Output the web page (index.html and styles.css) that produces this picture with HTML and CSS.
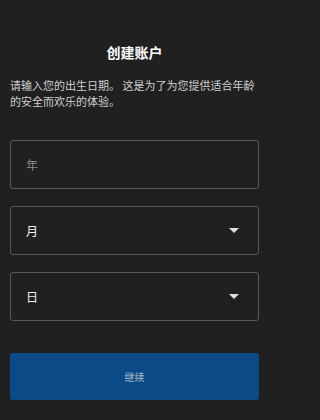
FILE: index.html
```html
<!DOCTYPE html>
<html lang="zh">
<head>
<meta charset="utf-8">
<link rel="stylesheet" href="styles.css">
</head>
<body>
<main class="page">
  <h1 class="title">创建账户</h1>
  <p class="desc">请输入您的出生日期。 这是为了为您提供适合年龄的安全而欢乐的体验。</p>
  <div class="field"><span class="placeholder">年</span></div>
  <div class="field select"><span class="value">月</span><span class="caret"></span></div>
  <div class="field select"><span class="value">日</span><span class="caret"></span></div>
  <button class="btn">继续</button>
</main>
</body>
</html>
```
FILE: styles.css
```css
html, body {
  margin: 0;
  padding: 0;
  background: #202020;
  height: 100%;
}
body {
  font-family: "Noto Sans CJK SC", "Noto Sans", sans-serif;
  color: #e8e8e8;
}
.page {
  width: 270px;
  box-sizing: border-box;
  padding: 0 11px 0 10px;
  display: flex;
  flex-direction: column;
}
.title {
  margin: 42px 0 0;
  font-size: 14px;
  font-weight: 700;
  line-height: 20px;
  text-align: center;
  color: #ffffff;
}
.desc {
  margin: 15px 0 0;
  font-size: 11px;
  line-height: 16px;
  color: #cfcfcf;
}
.field {
  margin-top: 31px;
  height: 49px;
  box-sizing: border-box;
  border: 1px solid #585858;
  border-radius: 3px;
  display: flex;
  align-items: center;
  padding: 0 19px 0 15px;
}
.field + .field {
  margin-top: 17px;
}
.placeholder {
  font-size: 12px;
  color: #8a8a8a;
}
.value {
  font-size: 12px;
  color: #f0f0f0;
  flex: 1;
}
.caret {
  width: 0;
  height: 0;
  border-left: 5px solid transparent;
  border-right: 5px solid transparent;
  border-top: 5px solid #e0e0e0;
}
.btn {
  margin-top: 32px;
  height: 47px;
  border: none;
  border-radius: 3px;
  background: #0b4a86;
  color: #a9b7c6;
  font-family: "Noto Sans CJK SC", sans-serif;
  font-size: 10px;
}
```
